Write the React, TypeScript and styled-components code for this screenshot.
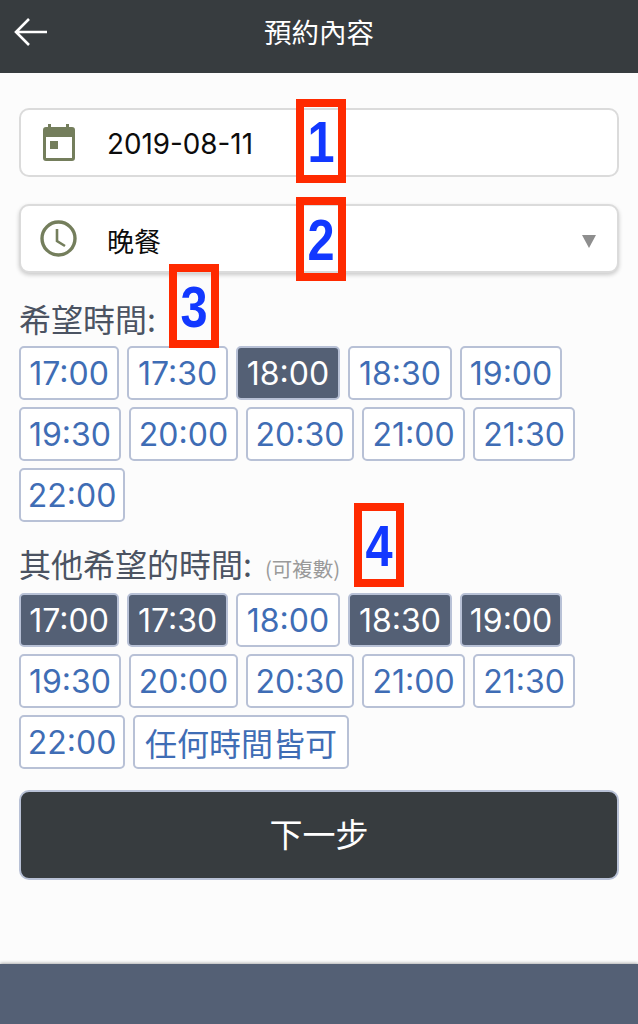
import React from 'react';
import styled, { createGlobalStyle } from 'styled-components';

const GlobalStyle = createGlobalStyle`
  html, body {
    margin: 0;
    padding: 0;
    background: #fcfcfc;
  }
  * {
    box-sizing: border-box;
  }
  body {
    font-family: Inter, "Noto Sans CJK TC", sans-serif;
  }
`;

const Page = styled.div`
  position: relative;
  width: 638px;
  height: 1024px;
  display: flex;
  flex-direction: column;
  overflow: hidden;
  background: #fcfcfc;
`;

const Header = styled.header`
  height: 73px;
  flex: none;
  display: grid;
  grid-template-columns: 1fr auto 1fr;
  align-items: center;
  padding: 0 14px;
  background: #373c3f;
  color: #fff;
`;

const BackButton = styled.div`
  display: flex;
  align-items: center;
  height: 32px;
  margin-top: -10px;
`;

const Title = styled.h1`
  margin: -12px 0 0;
  font-size: 27.5px;
  font-weight: 400;
  font-family: "Noto Sans CJK TC", sans-serif;
`;

const Main = styled.main`
  flex: 1;
  padding: 35px 19px 0;
`;

const Field = styled.div<{ $raised?: boolean }>`
  height: 69px;
  display: flex;
  align-items: center;
  border: 2px solid #dbdbdb;
  border-radius: 10px;
  background: #fff;
  padding: 0 21px 0 19px;
  margin-bottom: ${({ $raised }) => ($raised ? '21px' : '27px')};
  box-shadow: ${({ $raised }) => ($raised ? '0 2px 4px rgba(0, 0, 0, 0.2)' : 'none')};
`;

const FieldIcon = styled.div`
  width: 67px;
  flex: none;
  display: flex;
  align-items: center;
  justify-content: center;
  padding-right: 30px;
`;

const FieldText = styled.span<{ $cjk?: boolean }>`
  flex: 1;
  padding-top: ${({ $cjk }) => ($cjk ? '4px' : '2px')};
  font-size: ${({ $cjk }) => ($cjk ? '27px' : '27.8px')};
  color: #0c0c0c;
  font-family: Inter, "Noto Sans CJK TC", sans-serif;
`;

const Caret = styled.span`
  width: 0;
  height: 0;
  margin-top: 5px;
  border-left: 7px solid transparent;
  border-right: 7px solid transparent;
  border-top: 13px solid #8e8e8e;
`;

const Label = styled.div<{ $second?: boolean }>`
  height: 52px;
  margin-top: ${({ $second }) => ($second ? '19px' : '0')};
  padding-top: ${({ $second }) => ($second ? '2px' : '4px')};
  font-size: 32px;
  line-height: 40px;
  color: #4b5362;
  white-space: nowrap;
  font-family: "Noto Sans CJK TC", sans-serif;
`;

const Hint = styled.small`
  margin-left: 13px;
  font-size: 20.5px;
  color: #9a9a9a;
`;

const TimeGrid = styled.div`
  display: flex;
  flex-wrap: wrap;
  gap: 7px 8px;
`;

const TimeChip = styled.button<{ $selected?: boolean; $width: number }>`
  width: ${({ $width }) => $width}px;
  height: 54px;
  padding: 0;
  border: 2px solid #b8c1d6;
  border-radius: 5px;
  font-family: Inter, "Noto Sans CJK TC", sans-serif;
  font-size: 32px;
  font-weight: 400;
  color: ${({ $selected }) => ($selected ? '#fff' : '#3f6db5')};
  background: ${({ $selected }) => ($selected ? '#546075' : '#fff')};
`;

const NextButton = styled.button`
  display: block;
  width: 100%;
  height: 90px;
  margin-top: 21px;
  padding: 0 0 4px;
  border: 2px solid #b8c1d6;
  border-radius: 10px;
  background: #373c3f;
  color: #fff;
  font-size: 33px;
  font-family: "Noto Sans CJK TC", sans-serif;
`;

const Footer = styled.footer`
  height: 60px;
  flex: none;
  background: #546075;
  box-shadow: 0 -1px 3px rgba(0, 0, 0, 0.3);
`;

const Marker = styled.div<{ $left: number; $top: number }>`
  position: absolute;
  left: ${({ $left }) => $left}px;
  top: ${({ $top }) => $top}px;
  width: 50px;
  height: 84px;
  padding-top: 1px;
  display: flex;
  align-items: center;
  justify-content: center;
  border: 8px solid #ff2a00;
  color: #1238ff;
  font-family: "Liberation Sans", sans-serif;
  font-size: 58px;
  font-weight: 700;
`;

const MarkerDigit = styled.span`
  display: block;
  transform: scaleX(0.84);
`;

const BackArrow = () => (
  <svg width="34" height="30" viewBox="0 0 34 30" fill="none" stroke="#fff" strokeWidth="2.6">
    <path d="M33 15H2M15 2L2 15l13 13" />
  </svg>
);

const CalendarIcon = () => (
  <svg width="32" height="37" viewBox="0 0 32 37" fill="#747e5c">
    <path d="M5 0h3v3h15V0h3v3h3a3 3 0 0 1 3 3v28a3 3 0 0 1-3 3H3a3 3 0 0 1-3-3V6a3 3 0 0 1 3-3h2V0zM3 13v21h26V13H3z" />
    <rect x="7" y="17" width="8" height="8" />
  </svg>
);

const ClockIcon = () => (
  <svg width="37" height="37" viewBox="0 0 37 37" fill="none" stroke="#747e5c" strokeWidth="3.4">
    <circle cx="18.5" cy="18.5" r="16.5" />
    <path d="M17 9v12l8 5" strokeWidth="2.6" />
  </svg>
);

const slots = [
  { time: '17:00', width: 100 },
  { time: '17:30', width: 101 },
  { time: '18:00', width: 104 },
  { time: '18:30', width: 104 },
  { time: '19:00', width: 102 },
  { time: '19:30', width: 102 },
  { time: '20:00', width: 109 },
  { time: '20:30', width: 108 },
  { time: '21:00', width: 103 },
  { time: '21:30', width: 102 },
  { time: '22:00', width: 106 },
];
const otherSelected = ['17:00', '17:30', '18:30', '19:00'];

const App = () => (
  <Page>
    <GlobalStyle />
    <Header>
      <BackButton>
        <BackArrow />
      </BackButton>
      <Title>預約內容</Title>
    </Header>
    <Main>
      <Field>
        <FieldIcon>
          <CalendarIcon />
        </FieldIcon>
        <FieldText>2019-08-11</FieldText>
      </Field>
      <Field $raised>
        <FieldIcon>
          <ClockIcon />
        </FieldIcon>
        <FieldText $cjk>晚餐</FieldText>
        <Caret />
      </Field>
      <Label>希望時間:</Label>
      <TimeGrid>
        {slots.map(({ time, width }) => (
          <TimeChip key={time} $width={width} $selected={time === '18:00'}>
            {time}
          </TimeChip>
        ))}
      </TimeGrid>
      <Label $second>
        其他希望的時間:<Hint>(可複數)</Hint>
      </Label>
      <TimeGrid>
        {slots.map(({ time, width }) => (
          <TimeChip key={time} $width={width} $selected={otherSelected.includes(time)}>
            {time}
          </TimeChip>
        ))}
        <TimeChip $width={216}>任何時間皆可</TimeChip>
      </TimeGrid>
      <NextButton>下一步</NextButton>
    </Main>
    <Footer />
    <Marker $left={296} $top={99}><MarkerDigit>1</MarkerDigit></Marker>
    <Marker $left={296} $top={197}><MarkerDigit>2</MarkerDigit></Marker>
    <Marker $left={169} $top={264}><MarkerDigit>3</MarkerDigit></Marker>
    <Marker $left={354} $top={503}><MarkerDigit>4</MarkerDigit></Marker>
  </Page>
);

export default App;
